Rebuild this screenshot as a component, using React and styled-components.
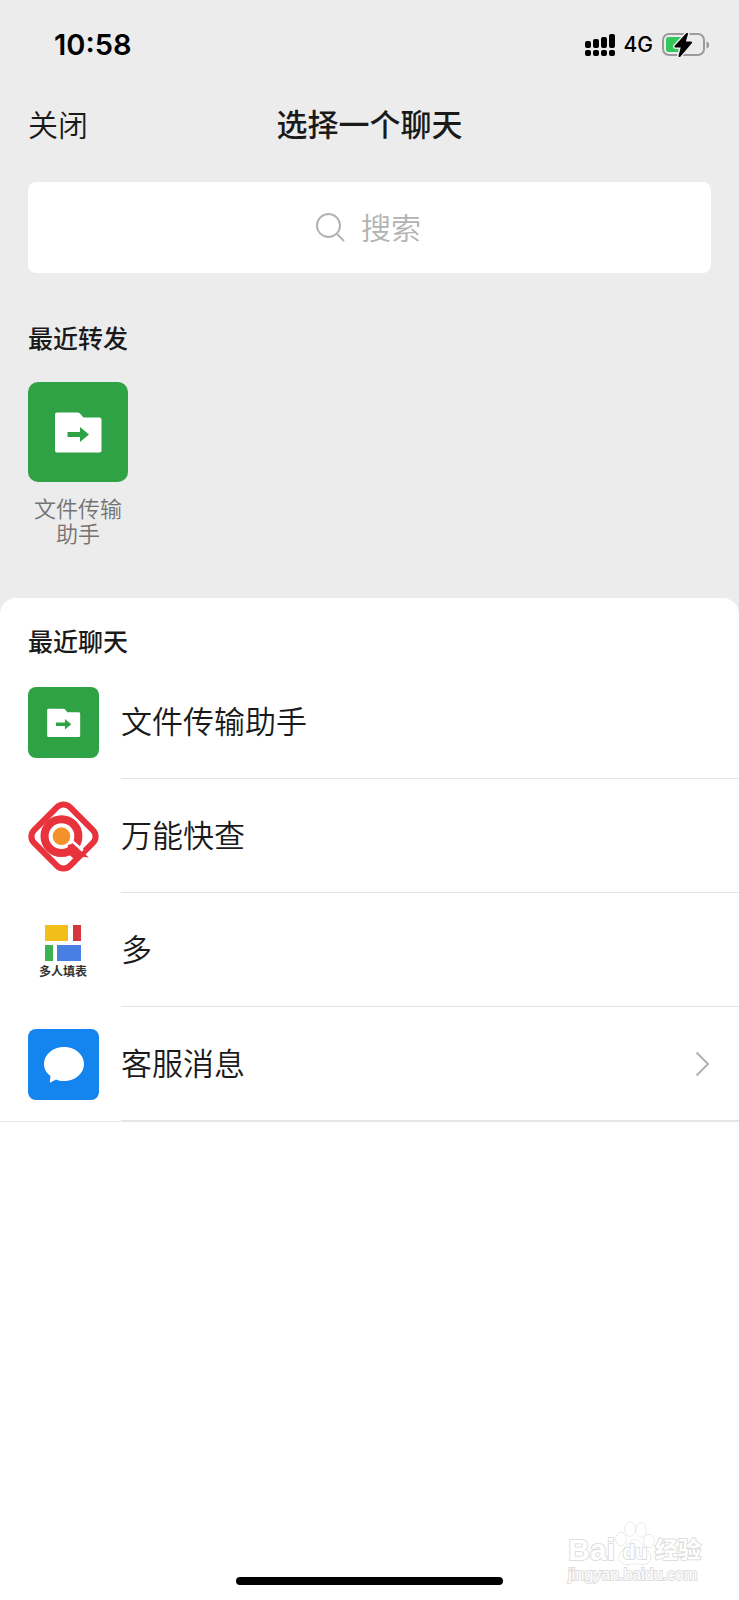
import React, { useState } from 'react';
import styled, { createGlobalStyle } from 'styled-components';

const GlobalStyle = createGlobalStyle`
  * {
    box-sizing: border-box;
  }

  body {
    margin: 0;
    background: #fff;
    color: #1a1a1a;
    font-family: Inter, "Noto Sans CJK SC", sans-serif;
    font-weight: 350;
    line-height: 1.2;
  }

  h1, h2, p, ul {
    margin: 0;
    padding: 0;
  }
`;

const Page = styled.div`
  min-height: 100vh;
  display: flex;
  flex-direction: column;
  background: #ececec;
`;

const StatusBar = styled.div`
  display: flex;
  align-items: center;
  justify-content: space-between;
  height: 90px;
  padding: 0 30px 0 54px;
  color: #000;
`;

const Time = styled.time`
  font-size: 29px;
  font-weight: 600;
`;

const StatusIcons = styled.div`
  display: flex;
  align-items: center;
  gap: 9px;
`;

const Network = styled.span`
  font-size: 21px;
  font-weight: 500;
`;

const NavBar = styled.header`
  display: grid;
  grid-template-columns: 1fr auto 1fr;
  align-items: center;
  height: 70px;
  padding: 0 28px;
`;

const CloseButton = styled.button`
  justify-self: start;
  padding: 0;
  border: 0;
  background: none;
  color: #1a1a1a;
  font: inherit;
  font-size: 30px;
`;

const Title = styled.h1`
  font-size: 31px;
  font-weight: 500;
`;

const SearchBox = styled.label`
  display: flex;
  align-items: center;
  justify-content: center;
  gap: 16px;
  height: 91px;
  margin: 22px 28px 0;
  border-radius: 8px;
  background: #fff;
`;

const SearchInput = styled.input`
  field-sizing: content;
  min-width: 62px;
  padding: 0 0 4px;
  border: 0;
  outline: 0;
  background: none;
  color: #1a1a1a;
  font: inherit;
  font-size: 30px;

  &::placeholder {
    color: #b2b2b2;
    opacity: 1;
  }
`;

const SectionTitle = styled.h2`
  font-size: 25px;
  font-weight: 500;
  line-height: 36px;
`;

const Forwards = styled.section`
  padding: 48px 28px 51px;
`;

const ForwardList = styled.ul`
  display: flex;
  gap: 28px;
  margin-top: 25px;
  list-style: none;
`;

const ForwardButton = styled.button`
  display: flex;
  flex-direction: column;
  align-items: center;
  gap: 15px;
  width: 100px;
  padding: 0;
  border: 0;
  background: none;
  color: #737373;
  font: inherit;
  font-size: 22px;
  line-height: 25px;
`;

const ForwardName = styled.span`
  width: 88px;
`;

const Tile = styled.span`
  display: flex;
  flex-shrink: 0;
  width: ${({ $size }) => $size}px;
  height: ${({ $size }) => $size}px;
  border-radius: ${({ $size }) => ($size > 80 ? 10 : 8)}px;
  overflow: hidden;
  background: ${({ $color }) => $color};
`;

const Sheet = styled.main`
  flex: 1;
  display: flex;
  flex-direction: column;
  padding-top: 26px;
  border-radius: 16px 16px 0 0;
  background: #fff;
`;

const SheetTitle = styled(SectionTitle)`
  padding: 0 28px;
`;

const ChatList = styled.ul`
  margin-top: 5px;
  border-bottom: 1px solid #e8e8e8;
  list-style: none;
`;

const ChatRow = styled.button`
  display: flex;
  align-items: center;
  gap: 22px;
  width: 100%;
  padding: 0 0 0 28px;
  border: 0;
  background: none;
  color: #1a1a1a;
  font: inherit;
  font-size: 31px;
  text-align: left;
`;

const ChatBody = styled.span`
  flex: 1;
  display: flex;
  align-items: center;
  justify-content: space-between;
  height: 114px;
  padding-right: 29px;
  border-bottom: 1px solid #e4e4e4;
`;

const Footer = styled.footer`
  position: relative;
  display: flex;
  justify-content: center;
  margin-top: auto;
  padding-bottom: 15px;
`;

const HomeBar = styled.div`
  width: 36%;
  height: 8px;
  border-radius: 4px;
  background: #000;
`;

const Watermark = styled.div`
  position: absolute;
  right: 38px;
  bottom: 16px;
  color: #fff;
  font-family: "Liberation Sans", "Noto Sans CJK SC", sans-serif;
  font-weight: 700;
  -webkit-text-stroke: 2px #dedede;
  paint-order: stroke fill;
`;

const Brand = styled.div`
  display: flex;
  align-items: flex-end;
  font-size: 30px;
  line-height: 32px;
`;

const Paw = styled.span`
  position: relative;
  display: flex;
  align-items: flex-end;
  justify-content: center;
  width: 40px;
  height: 46px;
  font-size: 20px;
  line-height: 28px;

  svg {
    position: absolute;
    inset: 0;
  }

  span {
    position: relative;
  }
`;

const BrandName = styled.span`
  font-size: 23px;
`;

const Site = styled.div`
  font-size: 16px;
  font-weight: 400;
  line-height: 18px;
`;

const SignalIcon = () => (
  <svg width="30" height="24" viewBox="0 0 30 24" aria-hidden="true">
    {[7, 9, 11, 14].map((height, i) => (
      <g key={height}>
        <rect x={i * 8} y={15 - height} width="6" height={height} rx="2" />
        <rect x={i * 8} y="17" width="6" height="6" rx="2" />
      </g>
    ))}
  </svg>
);

const BatteryIcon = () => (
  <svg width="47" height="24" viewBox="0 0 47 24" aria-hidden="true">
    <rect x="1" y="1" width="41" height="21" rx="6" fill="none" stroke="#9b9b9b" strokeWidth="2" />
    <path d="M44.500 8.500q3 1 3 3.500t-3 3.500z" fill="#9b9b9b" />
    <path d="M6.500 4H20v15H6.500Q4 19 4 16.500v-10Q4 4 6.500 4z" fill="#34c759" />
    <path
      d="M25 1 13.500 13.500h6.500L17.500 23 29 9.500h-6.500z"
      stroke="#ececec"
      strokeWidth="5"
      strokeLinejoin="round"
    />
    <path
      d="M25 1 13.500 13.500h6.500L17.500 23 29 9.500h-6.500z"
      stroke="#000"
      strokeWidth="2"
      strokeLinejoin="round"
    />
  </svg>
);

const SearchIcon = () => (
  <svg width="29" height="29" viewBox="0 0 29 29" fill="none" stroke="#b2b2b2" strokeWidth="2" aria-hidden="true">
    <circle cx="12.500" cy="12.500" r="11.500" />
    <path d="m20.500 20.500 7.500 7.500" />
  </svg>
);

const FolderIcon = () => (
  <svg width="100%" height="100%" viewBox="0 0 100 100" aria-hidden="true">
    <path
      d="M29 30.500h20.500q1.500 0 2.500 1l3.500 4h16q2 0 2 2v31q0 2-2 2H29q-2 0-2-2v-36q0-2 2-2z"
      fill="#fff"
    />
    <path d="M39.500 50H52v-5l9 7.500-9 7.500v-5H39.500z" fill="#2fa245" />
  </svg>
);

const QueryIcon = () => (
  <svg width="100%" height="100%" viewBox="0 0 210 210" fill="none" aria-hidden="true">
    <rect
      x="30" y="30" width="150" height="150" rx="27"
      transform="rotate(45 105 105)"
      stroke="#e8323c"
      strokeWidth="18"
    />
    <circle cx="99" cy="104" r="50" stroke="#e8323c" strokeWidth="24" />
    <path d="M118 130l16-4 46 41-22-2-14 14-26-24z" fill="#e8323c" />
    <path d="M128 116l34 31" stroke="#fff" strokeWidth="8" />
    <circle cx="99" cy="104" r="26" fill="#f3922b" />
  </svg>
);

const FormIcon = () => (
  <svg width="100%" height="100%" viewBox="0 0 71 71" aria-hidden="true">
    <path d="M17 10h23v16H17z" fill="#f2be1a" />
    <path d="M45 10h8v16h-8z" fill="#d6373f" />
    <path d="M17 30h8v16h-8z" fill="#3cb352" />
    <path d="M29 30h24v16H29z" fill="#487fe5" />
    <text
      x="35"
      y="61"
      textAnchor="middle"
      fill="#333"
      fontFamily="Noto Sans CJK SC, sans-serif"
      fontSize="12"
      fontWeight="700"
    >
      多人填表
    </text>
  </svg>
);

const MessageIcon = () => (
  <svg width="100%" height="100%" viewBox="0 0 71 71" aria-hidden="true">
    <path
      d="M36 18c11 0 20 7.500 20 17s-9 17-20 17c-3 0-5.500-.5-8-1.500L22.500 53.500q-.8.300-.7-.7l.7-5.800C18.500 44 16 40 16 35c0-9.500 9-17 20-17z"
      fill="#fff"
    />
  </svg>
);

const ChevronIcon = () => (
  <svg width="15" height="26" viewBox="0 0 15 26" fill="none" stroke="#b2b2b2" strokeWidth="2" aria-hidden="true">
    <path d="M1.500 1.500 13 13 1.500 24.500" />
  </svg>
);

const PawIcon = () => (
  <svg width="40" height="46" viewBox="0 0 40 46" fill="#fff" stroke="#d4d4d4" aria-hidden="true">
    <ellipse cx="6" cy="19" rx="5" ry="6.500" />
    <ellipse cx="15" cy="9" rx="5" ry="7" />
    <ellipse cx="26" cy="10" rx="5" ry="7" />
    <ellipse cx="34" cy="21" rx="5" ry="6.500" />
    <path d="M20 20c6 0 8 6 12 10 7 7 3 15-5 14q-7-1-14 0c-9 1-12-7-5-14 4-4 6-10 12-10z" />
  </svg>
);

const chats = [
  { name: '文件传输助手', color: '#2fa245', icon: <FolderIcon /> },
  { name: '万能快查', color: '#fff', icon: <QueryIcon /> },
  { name: '多', color: '#fff', icon: <FormIcon /> },
  { name: '客服消息', color: '#1485ee', icon: <MessageIcon />, more: true },
];

const App = () => {
  const [query, setQuery] = useState('');

  return (
    <>
      <GlobalStyle />
      <Page>
        <StatusBar>
          <Time>10:58</Time>
          <StatusIcons>
            <SignalIcon />
            <Network>4G</Network>
            <BatteryIcon />
          </StatusIcons>
        </StatusBar>

        <NavBar>
          <CloseButton type="button">关闭</CloseButton>
          <Title>选择一个聊天</Title>
        </NavBar>

        <SearchBox>
          <SearchIcon />
          <SearchInput
            type="text"
            aria-label="搜索"
            placeholder="搜索"
            value={query}
            onChange={(e) => setQuery(e.target.value)}
          />
        </SearchBox>

        <Forwards>
          <SectionTitle>最近转发</SectionTitle>
          <ForwardList>
            <li>
              <ForwardButton type="button">
                <Tile $size={100} $color="#2fa245">
                  <FolderIcon />
                </Tile>
                <ForwardName>文件传输助手</ForwardName>
              </ForwardButton>
            </li>
          </ForwardList>
        </Forwards>

        <Sheet>
          <SheetTitle>最近聊天</SheetTitle>
          <ChatList>
            {chats.map((chat) => (
              <li key={chat.name}>
                <ChatRow type="button">
                  <Tile $size={71} $color={chat.color}>
                    {chat.icon}
                  </Tile>
                  <ChatBody>
                    {chat.name}
                    {chat.more && <ChevronIcon />}
                  </ChatBody>
                </ChatRow>
              </li>
            ))}
          </ChatList>

          <Footer>
            <HomeBar />
            <Watermark>
              <Brand>
                Bai
                <Paw>
                  <PawIcon />
                  <span>du</span>
                </Paw>
                <BrandName>经验</BrandName>
              </Brand>
              <Site>jingyan.baidu.com</Site>
            </Watermark>
          </Footer>
        </Sheet>
      </Page>
    </>
  );
};

export default App;
